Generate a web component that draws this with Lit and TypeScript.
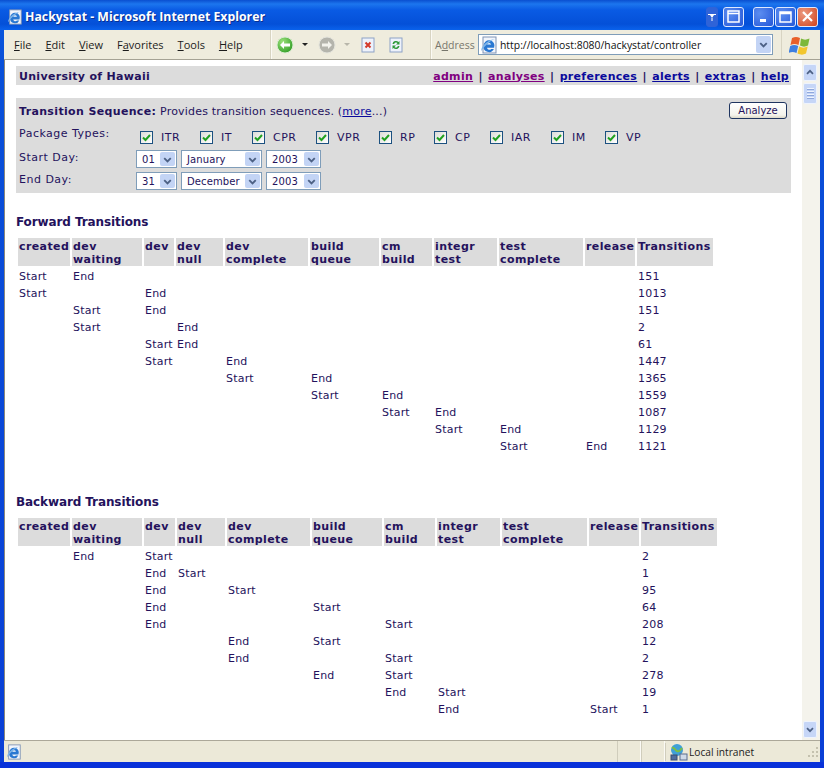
import { LitElement, css, html, svg } from "lit";
import { customElement } from "lit/decorators.js";

type Row = { start: number; end: number; count: number };

const COLUMNS = [
  ["created"],
  ["dev", "waiting"],
  ["dev"],
  ["dev", "null"],
  ["dev", "complete"],
  ["build", "queue"],
  ["cm", "build"],
  ["integr", "test"],
  ["test", "complete"],
  ["release"],
  ["Transitions"],
];

const FORWARD_WIDTHS = [52, 70, 30, 47, 83, 69, 51, 63, 84, 50, 76];
const BACKWARD_WIDTHS = [52, 70, 31, 48, 83, 70, 51, 63, 85, 50, 76];

const FORWARD: Row[] = [
  { start: 0, end: 1, count: 151 },
  { start: 0, end: 2, count: 1013 },
  { start: 1, end: 2, count: 151 },
  { start: 1, end: 3, count: 2 },
  { start: 2, end: 3, count: 61 },
  { start: 2, end: 4, count: 1447 },
  { start: 4, end: 5, count: 1365 },
  { start: 5, end: 6, count: 1559 },
  { start: 6, end: 7, count: 1087 },
  { start: 7, end: 8, count: 1129 },
  { start: 8, end: 9, count: 1121 },
];

const BACKWARD: Row[] = [
  { end: 1, start: 2, count: 2 },
  { end: 2, start: 3, count: 1 },
  { end: 2, start: 4, count: 95 },
  { end: 2, start: 5, count: 64 },
  { end: 2, start: 6, count: 208 },
  { end: 4, start: 5, count: 12 },
  { end: 4, start: 6, count: 2 },
  { end: 5, start: 6, count: 278 },
  { end: 6, start: 7, count: 19 },
  { end: 7, start: 9, count: 1 },
];

const PACKAGES: [string, number][] = [
  ["ITR", 60],
  ["IT", 52],
  ["CPR", 64],
  ["VPR", 63],
  ["RP", 55],
  ["CP", 56],
  ["IAR", 61],
  ["IM", 54],
  ["VP", 50],
];

const ieIcon = (size: number) => html`<svg width=${size} height=${size} viewBox="0 0 18 18">
  <rect x="3" y="1" width="13" height="16" fill="#f2f5fb" stroke="#7f93b5" />
  <path d="M3.500 10a5.500 5.500 0 1 1 10.600 1.800H7a2.400 2.400 0 0 0 4.200 1.200h2.700A5.500 5.500 0 0 1 3.500 10Z" fill="#2a78d2" />
  <path d="M7 8.600h4.200A2.200 2.200 0 0 0 7 8.600Z" fill="#f2f5fb" />
  <path d="M1.500 15c-1.500-3 5-11 13-12-5 2-12 9-13 12Z" fill="#7fb6ea" />
</svg>`;

const chevron = svg`<path d="M3.500 5.500 7 9l3.500-3.500" fill="none" stroke="#4d6185" stroke-width="2" />`;

@customElement("app-root")
export class AppRoot extends LitElement {
  static styles = css`
    :host {
      display: block;
      width: 824px;
      height: 768px;
      overflow: hidden;
      background: #0831d9;
      font-family: "DejaVu Sans", Verdana, sans-serif;
      font-size: 11px;
      color: #24125c;
    }
    .window {
      display: flex;
      flex-direction: column;
      height: 762px;
      padding: 0 4px;
      background: linear-gradient(#0a5be0, #0a50d8 60px, #0a3fd6);
    }

    .title {
      display: flex;
      align-items: center;
      height: 30px;
      flex: none;
      margin: 0 -4px;
      padding: 3px 6px 0 7px;
      box-sizing: border-box;
      background: linear-gradient(#0a4fd0, #1c76ee 4px, #0a5be4 10px, #0450d8 24px, #0a62ec);
    }
    .title-text {
      margin-left: 2px;
      font: 700 12.300px "Open Sans", sans-serif;
      color: #fff;
      text-shadow: 1px 1px #0a2f90;
    }
    .title-buttons {
      display: flex;
      margin-left: auto;
    }
    .wbtn {
      display: flex;
      align-items: center;
      justify-content: center;
      width: 21px;
      height: 20px;
      margin-left: 1px;
      box-sizing: border-box;
      border: 1px solid #dfe9ff;
      border-radius: 3px;
      background: radial-gradient(circle at 30% 30%, #5c8df0, #2457d8);
    }
    .wbtn.narrow {
      width: 12px;
      margin-right: 4px;
      border-color: #2f63d8;
      background: #2f63d8;
    }
    .wbtn.gap {
      margin-right: 8px;
    }
    .wbtn.close {
      background: radial-gradient(circle at 30% 30%, #ec9a80, #d0421c);
    }

    .toolbar {
      display: flex;
      align-items: center;
      flex: none;
      height: 30px;
      box-sizing: border-box;
      background: #efecdd;
      border-bottom: 1px solid #a5a294;
      font: 11px "Open Sans", sans-serif;
      color: #1c1c1c;
    }
    .menu {
      display: flex;
      gap: 14px;
      width: 266px;
      padding-left: 10px;
      box-sizing: border-box;
    }
    .sep {
      align-self: stretch;
      width: 1px;
      background: #d8d4c2;
      border-right: 1px solid #fbfaf4;
    }
    .nav-icons {
      display: flex;
      align-items: center;
      width: 158px;
      padding-left: 4px;
      box-sizing: border-box;
    }
    .nav-icons .drop {
      width: 0;
      height: 0;
      margin: 0 10px 0 8px;
      border: 3px solid transparent;
      border-top: 3px solid #222;
      border-bottom: 0;
    }
    .nav-icons .drop.off {
      margin-right: 11px;
      border-top-color: #b8b6aa;
    }
    .nav-icons .last {
      margin-left: 14px;
    }
    .addr-label {
      margin-left: 3px;
      width: 43px;
      font-size: 10.500px;
      color: #77766c;
    }
    .addr {
      display: flex;
      align-items: center;
      width: 295px;
      height: 21px;
      box-sizing: border-box;
      padding-left: 1px;
      background: #fff;
      border: 1px solid #7f9db9;
      color: #111;
      font-size: 10.400px;
    }
    .addr span {
      margin-left: 2px;
    }
    .addr .dd {
      display: flex;
      align-items: center;
      justify-content: center;
      width: 15px;
      height: 17px;
      margin-left: auto;
      margin-right: 1px;
      background: #c3d4f5;
      border-radius: 2px;
    }
    .flag {
      display: flex;
      align-self: stretch;
      align-items: center;
      flex: 1;
      margin-left: 8px;
      padding-left: 7px;
      border-left: 1px solid #d8d4c2;
    }

    .view {
      display: flex;
      flex: 1;
      min-height: 0;
      background: #fff;
      border-left: 1px solid #8a887c;
    }
    .page {
      flex: 1;
      min-width: 0;
      padding: 6px 0 0 11px;
      overflow: hidden;
    }

    .scroll {
      display: flex;
      flex-direction: column;
      flex: none;
      width: 18px;
      padding: 4px 3px 2px 1px;
      box-sizing: border-box;
      background: #f4f3ec;
    }
    .sbtn {
      display: flex;
      align-items: center;
      justify-content: center;
      height: 15px;
      border-radius: 2px;
      background: #c6d6f7;
      border: 1px solid #eef3fd;
    }
    .thumb {
      display: flex;
      flex-direction: column;
      align-items: center;
      justify-content: center;
      gap: 1px;
      height: 19px;
      margin-top: 2px;
      border-radius: 2px;
      background: #c6d6f7;
      border: 1px solid #eef3fd;
    }
    .thumb i {
      display: block;
      width: 7px;
      height: 1px;
      background: #eef3fd;
      border-bottom: 1px solid #8fa8dc;
    }
    .spacer {
      flex: 1;
    }

    .status {
      display: flex;
      align-items: center;
      flex: none;
      height: 22px;
      box-sizing: border-box;
      background: #ece9d8;
      border-top: 1px solid #aca899;
      font: 10.200px "Open Sans", sans-serif;
      color: #1c1c1c;
    }
    .status .cell {
      align-self: stretch;
      width: 22px;
      border-left: 1px solid #d0cdbc;
      border-right: 1px solid #fbfaf4;
    }
    .status .ie {
      display: flex;
      margin-left: 2px;
    }
    .status .fill {
      flex: 1;
    }
    .status .zone {
      display: flex;
      align-items: center;
      width: 155px;
      padding-left: 3px;
      box-sizing: border-box;
      border-left: 1px solid #d0cdbc;
    }
    .status .grip {
      margin-left: auto;
      margin-right: 1px;
    }

    .bar {
      display: flex;
      justify-content: space-between;
      align-items: center;
      width: 775px;
      height: 19px;
      padding: 1px 2px 0 3px;
      box-sizing: border-box;
      background: #dcdcdc;
      font-weight: 700;
      letter-spacing: 0.3px;
      color: #24125c;
    }
    .nav {
      word-spacing: 1.200px;
    }
    a {
      color: #0a0a9c;
    }
    a.seen {
      color: #800080;
    }

    .panel {
      position: relative;
      width: 775px;
      height: 95px;
      margin-top: 13px;
      padding: 6px 3px 0;
      box-sizing: border-box;
      background: #dcdcdc;
      letter-spacing: 0.2px;
    }
    .panel-title {
      height: 17px;
      line-height: 16px;
    }
    .panel-title b {
      letter-spacing: 0.35px;
    }
    .analyze {
      position: absolute;
      top: 4px;
      right: 4px;
      width: 58px;
      height: 17px;
      padding: 0;
      border: 1px solid #1f3560;
      border-radius: 3px;
      background: linear-gradient(#fff, #f4f3ec 80%, #dcd8c8);
      font: 10px "DejaVu Sans", sans-serif;
      color: #24125c;
    }
    .form-row {
      display: flex;
      align-items: center;
    }
    .form-row label {
      flex: none;
      letter-spacing: 0.5px;
    }
    .types {
      height: 22px;
      margin-top: 5px;
    }
    .types label {
      width: 121px;
      margin-top: -8px;
    }
    .pkg {
      display: flex;
      align-items: center;
      flex: none;
      letter-spacing: 0.5px;
    }
    .box {
      display: flex;
      width: 13px;
      height: 13px;
      margin-right: 8px;
      box-sizing: border-box;
      border: 1px solid #1c5180;
      background: linear-gradient(135deg, #dcdcd7, #fff);
    }
    .dates {
      height: 22px;
      gap: 4px;
    }
    .dates label {
      width: 113px;
      margin-top: -4px;
    }
    .select {
      display: flex;
      align-items: center;
      height: 18px;
      padding-left: 5px;
      box-sizing: border-box;
      background: #fff;
      border: 1px solid #7f9db9;
      font-size: 10px;
      letter-spacing: 0.1px;
      color: #24125c;
    }
    .select .dd {
      display: flex;
      align-items: center;
      justify-content: center;
      width: 15px;
      height: 14px;
      margin-left: auto;
      margin-right: 1px;
      border-radius: 2px;
      background: #c3d4f5;
    }

    h2 {
      margin: 20px 0 7px;
      height: 16px;
      padding-top: 2px;
      box-sizing: border-box;
      font-size: 12px;
      line-height: 14px;
      font-weight: 700;
      letter-spacing: -0.1px;
      color: #24125c;
    }
    h2.back {
      margin-top: 38px;
    }
    table {
      table-layout: fixed;
      border-collapse: separate;
      border-spacing: 2px;
    }
    th {
      height: 28px;
      padding: 2px 0 0 1px;
      box-sizing: border-box;
      background: #dcdcdc;
      vertical-align: top;
      text-align: left;
      font-weight: 700;
      font-size: 11px;
      line-height: 13px;
      letter-spacing: 0.4px;
      overflow: hidden;
    }
    th div {
      white-space: nowrap;
    }
    td {
      height: 15px;
      padding: 2px 0 0 1px;
      box-sizing: border-box;
      font-size: 11px;
      line-height: 13px;
      letter-spacing: 0.2px;
      white-space: nowrap;
    }
  `;

  private renderTable(rows: Row[], widths: number[]) {
    return html`<table style="width:${widths.reduce((a, b) => a + b + 2, 2)}px">
      <colgroup>${widths.map((w) => html`<col style="width:${w}px" />`)}</colgroup>
      <tr>${COLUMNS.map((c) => html`<th>${c.map((line) => html`<div>${line}</div>`)}</th>`)}</tr>
      ${rows.map(
        (r) => html`<tr>
          ${COLUMNS.map((_, i) => {
            if (i === 10) return html`<td>${r.count}</td>`;
            return html`<td>${i === r.start ? "Start" : i === r.end ? "End" : ""}</td>`;
          })}
        </tr>`,
      )}
    </table>`;
  }

  private renderSelect(value: string, width: number) {
    return html`<div class="select" style="width:${width}px">
      ${value}
      <span class="dd"><svg width="13" height="13" viewBox="0 0 14 14">${chevron}</svg></span>
    </div>`;
  }

  private renderTitleBar() {
    return html`<div class="title">
      ${ieIcon(16)}
      <span class="title-text">Hackystat - Microsoft Internet Explorer</span>
      <div class="title-buttons">
        <div class="wbtn narrow">
          <svg width="8" height="8" viewBox="0 0 8 8"><path d="M0 1h8v1H6L4 5 2 2H0Z" fill="#fff" /><path d="M3.500 5h1v3h-1Z" fill="#fff" /></svg>
        </div>
        <div class="wbtn gap">
          <svg width="13" height="13" viewBox="0 0 13 13"><path d="M1 1h11v11H1ZM1 3.500h11" fill="none" stroke="#fff" stroke-width="1.500" /></svg>
        </div>
        <div class="wbtn">
          <svg width="13" height="13" viewBox="0 0 13 13"><rect x="3" y="9" width="6" height="3" fill="#fff" /></svg>
        </div>
        <div class="wbtn">
          <svg width="13" height="13" viewBox="0 0 13 13"><path d="M1 2h11v10H1ZM1 3.500h11" fill="none" stroke="#fff" stroke-width="1.500" /></svg>
        </div>
        <div class="wbtn close">
          <svg width="13" height="13" viewBox="0 0 13 13"><path d="m2 2 9 9M11 2l-9 9" stroke="#fff" stroke-width="2.200" /></svg>
        </div>
      </div>
    </div>`;
  }

  private renderToolbar() {
    return html`<div class="toolbar">
      <div class="menu">
        <span><u>F</u>ile</span><span><u>E</u>dit</span><span><u>V</u>iew</span>
        <span>F<u>a</u>vorites</span><span><u>T</u>ools</span><span><u>H</u>elp</span>
      </div>
      <div class="sep"></div>
      <div class="nav-icons">
        <svg width="18" height="18" viewBox="0 0 18 18">
          <defs>
            <radialGradient id="go" cx="0.35" cy="0.3" r="0.8"><stop offset="0" stop-color="#9be07a" /><stop offset="1" stop-color="#2c9a22" /></radialGradient>
          </defs>
          <circle cx="9" cy="9" r="8" fill="url(#go)" stroke="#dcebd4" />
          <path d="M4 9l4-4v2.500h6v3H8V13Z" fill="#fff" />
        </svg>
        <span class="drop"></span>
        <svg width="18" height="18" viewBox="0 0 18 18">
          <circle cx="9" cy="9" r="8" fill="#b4b4ac" stroke="#e4e4dc" />
          <path d="M14 9l-4-4v2.500H4v3h6V13Z" fill="#f2f2ec" />
        </svg>
        <span class="drop off"></span>
        <svg width="14" height="16" viewBox="0 0 14 16">
          <rect x="1" y="1" width="12" height="14" fill="#eef2fb" stroke="#8ea2c6" />
          <path d="m4.500 5.500 5 5m0-5-5 5" stroke="#d43a2a" stroke-width="2" />
        </svg>
        <svg class="last" width="14" height="16" viewBox="0 0 14 16">
          <rect x="1" y="1" width="12" height="14" fill="#eef2fb" stroke="#8ea2c6" />
          <path d="M3.500 7a3.500 3.500 0 0 1 6-2l1-1v3.500H7L8.500 6a2 2 0 0 0-3.300 1ZM10.500 9a3.500 3.500 0 0 1-6 2l-1 1V8.500H7L5.500 10a2 2 0 0 0 3.300-1Z" fill="#2e9a3a" />
        </svg>
      </div>
      <div class="sep"></div>
      <span class="addr-label">A<u>d</u>dress</span>
      <div class="addr">
        ${ieIcon(18)}
        <span>http://localhost:8080/hackystat/controller</span>
        <div class="dd"><svg width="13" height="13" viewBox="0 0 14 14">${chevron}</svg></div>
      </div>
      <div class="flag">
        <svg width="24" height="24" viewBox="0 0 24 24">
          <path d="M3 5c3-1.500 5-1.500 8 0l-1.500 7c-3-1.500-5-1.500-8 0Z" fill="#e8602a" />
          <path d="M12 5.500c3 1.500 5 1.500 8.500 0L19 12.500c-3 1.500-5 1.500-8 0Z" fill="#7cb83a" />
          <path d="M1.200 13c3-1.500 5-1.500 8 0L7.500 20c-3-1.500-5-1.500-8 0Z" fill="#3f7fe0" />
          <path d="M10.200 13.500c3 1.500 5 1.500 8.500 0L17 20.500c-3 1.500-5 1.500-8.500 0Z" fill="#f2c62e" />
        </svg>
      </div>
    </div>`;
  }

  private renderPanel() {
    return html`<div class="panel">
      <button class="analyze">Analyze</button>
      <div class="panel-title">
        <b>Transition Sequence:</b> Provides transition sequences. (<a href="#">more</a>...)
      </div>
      <div class="form-row types">
        <label>Package Types:</label>
        ${PACKAGES.map(
          ([name, width]) => html`<div class="pkg" style="width:${width}px">
            <span class="box">
              <svg width="11" height="11" viewBox="0 0 11 11"><path d="m2 5.500 2.500 2.500L9 3" fill="none" stroke="#21a121" stroke-width="2" /></svg>
            </span>
            ${name}
          </div>`,
        )}
      </div>
      <div class="form-row dates">
        <label>Start Day:</label>
        ${this.renderSelect("01", 41)} ${this.renderSelect("January", 81)} ${this.renderSelect("2003", 55)}
      </div>
      <div class="form-row dates">
        <label>End Day:</label>
        ${this.renderSelect("31", 41)} ${this.renderSelect("December", 81)} ${this.renderSelect("2003", 55)}
      </div>
    </div>`;
  }

  render() {
    return html`<div class="window">
      ${this.renderTitleBar()} ${this.renderToolbar()}
      <div class="view">
        <div class="page">
          <div class="bar">
            <span>University of Hawaii</span>
            <span class="nav">
              <a class="seen" href="#">admin</a> | <a class="seen" href="#">analyses</a> |
              <a href="#">preferences</a> | <a href="#">alerts</a> | <a href="#">extras</a> |
              <a href="#">help</a>
            </span>
          </div>
          ${this.renderPanel()}
          <h2>Forward Transitions</h2>
          ${this.renderTable(FORWARD, FORWARD_WIDTHS)}
          <h2 class="back">Backward Transitions</h2>
          ${this.renderTable(BACKWARD, BACKWARD_WIDTHS)}
        </div>
        <div class="scroll">
          <div class="sbtn"><svg width="13" height="13" viewBox="0 0 14 14" style="transform:scaleY(-1)">${chevron}</svg></div>
          <div class="thumb"><i></i><i></i><i></i><i></i></div>
          <div class="spacer"></div>
          <div class="sbtn"><svg width="13" height="13" viewBox="0 0 14 14">${chevron}</svg></div>
        </div>
      </div>
      <div class="status">
        <span class="ie">${ieIcon(16)}</span>
        <span class="fill"></span>
        <span class="cell"></span><span class="cell"></span>
        <div class="zone">
          <svg width="20" height="18" viewBox="0 0 20 18">
            <circle cx="8" cy="7" r="6" fill="#3fa0d8" />
            <path d="M3 5c2-1 3 2 5 3s3 0 5-3" fill="none" stroke="#7cc043" stroke-width="2" />
            <rect x="2" y="12" width="6" height="5" fill="#4f6d9e" stroke="#3a4d6e" />
            <rect x="11" y="11" width="7" height="6" fill="#cfd9e8" stroke="#5a6d8e" />
          </svg>
          Local intranet
          <svg class="grip" width="12" height="12" viewBox="0 0 12 12">
            <path d="M9 1h2v2H9ZM5 5h2v2H5ZM9 5h2v2H9ZM1 9h2v2H1ZM5 9h2v2H5ZM9 9h2v2H9Z" fill="#c4c1ae" />
          </svg>
        </div>
      </div>
    </div>`;
  }
}

declare global {
  interface HTMLElementTagNameMap {
    "app-root": AppRoot;
  }
}
